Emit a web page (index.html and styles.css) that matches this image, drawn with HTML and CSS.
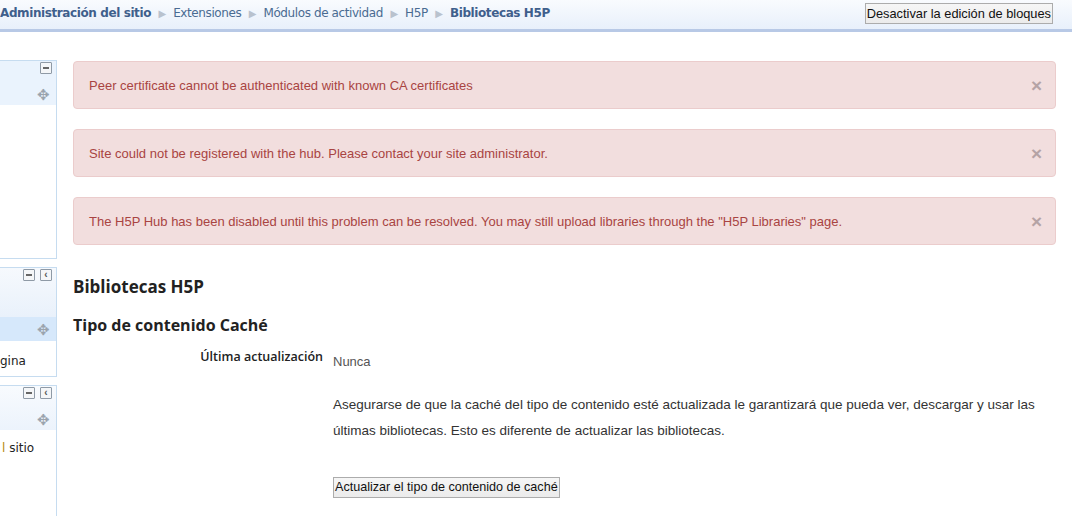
FILE: index.html
```html
<!DOCTYPE html>
<html lang="es">
  <head>
    <meta charset="UTF-8" />
    <title>Bibliotecas H5P</title>
    <link rel="stylesheet" href="styles.css">
  </head>
  <body>
    <div class="navbar">
      <div class="breadcrumb">
        <a class="first" href="#">Administración del sitio</a>
        <span class="sep">&#9654;</span>
        <a href="#">Extensiones</a>
        <span class="sep">&#9654;</span>
        <a href="#">Módulos de actividad</a>
        <span class="sep">&#9654;</span>
        <a href="#">H5P</a>
        <span class="sep">&#9654;</span>
        <span class="current">Bibliotecas H5P</span>
      </div>
      <button class="btn edit-btn">Desactivar la edición de bloques</button>
    </div>

    <div class="page">
      <!-- left column, only its right edge is in view -->
      <div class="side">
        <div class="block block-one">
          <div class="block-head">
            <div class="icons"><span class="ico ico-min"></span></div>
            <div class="move-row"><span class="move">&#10021;</span></div>
          </div>
          <div class="block-body"></div>
        </div>
        <div class="block block-two">
          <div class="block-head">
            <div class="icons"><span class="ico ico-min"></span><span class="ico ico-dock">&#8249;</span></div>
          </div>
          <div class="move-row active"><span class="move">&#10021;</span></div>
          <div class="block-body"><span>gina</span></div>
        </div>
        <div class="block block-three">
          <div class="block-head">
            <div class="icons"><span class="ico ico-min"></span><span class="ico ico-dock">&#8249;</span></div>
            <div class="move-row"><span class="move">&#10021;</span></div>
          </div>
          <div class="block-body"><span><span class="hl">l</span> sitio</span></div>
        </div>
      </div>

      <div class="main">
        <div class="alert">
          <span>Peer certificate cannot be authenticated with known CA certificates</span>
          <span class="close">&times;</span>
        </div>
        <div class="alert">
          <span>Site could not be registered with the hub. Please contact your site administrator.</span>
          <span class="close">&times;</span>
        </div>
        <div class="alert">
          <span>The H5P Hub has been disabled until this problem can be resolved. You may still upload libraries through the "H5P Libraries" page.</span>
          <span class="close">&times;</span>
        </div>

        <h2>Bibliotecas H5P</h2>
        <h3>Tipo de contenido Caché</h3>

        <div class="form-row">
          <div class="label">Última actualización</div>
          <div class="value">
            <p class="never">Nunca</p>
            <p class="desc">Asegurarse de que la caché del tipo de contenido esté actualizada le garantizará que pueda ver, descargar y usar las últimas bibliotecas. Esto es diferente de actualizar las bibliotecas.</p>
            <button class="btn">Actualizar el tipo de contenido de caché</button>
          </div>
        </div>
      </div>
    </div>
  </body>
</html>
```

FILE: styles.css
```css
* {
  margin: 0;
  padding: 0;
  box-sizing: border-box;
}
body {
  font-family: "Liberation Sans", Arial, sans-serif;
  font-size: 13px;
  color: #333;
  background: #fff;
  overflow: hidden;
}
a {
  text-decoration: none;
}
.navbar {
  height: 32px;
  display: flex;
  justify-content: space-between;
  align-items: flex-start;
  padding: 3px 19px 0 0;
  background: linear-gradient(#f9fbfe, #e8f0fb);
  border-bottom: 3px solid #b8c9e6;
}
.breadcrumb {
  font-family: "DejaVu Sans", Verdana, sans-serif;
  font-size: 12px;
  color: #4a6b92;
  padding-top: 3px;
  letter-spacing: -0.4px;
}
.breadcrumb a {
  color: #4a6b92;
}
.breadcrumb .first,
.breadcrumb .current {
  font-weight: bold;
  color: #3f5f8c;
}
.sep {
  color: #b9c2ce;
  font-size: 10px;
  margin: 0 4px;
}
.btn {
  font-family: "Liberation Sans", Arial, sans-serif;
  font-size: 12.8px;
  color: #111;
  background: linear-gradient(#f6f6f6, #ebebeb);
  border: 1px solid #acacac;
  padding: 1px 1px 2px;
  height: 21px;
}
.page {
  display: flex;
  align-items: flex-start;
  gap: 16px;
  padding-top: 28px;
}
.side {
  width: 57px;
  flex-shrink: 0;
  display: flex;
  flex-direction: column;
  gap: 8px;
}
.block {
  border: 1px solid #c6dcf0;
  border-left: none;
  background: #fff;
}
.block-head {
  background: linear-gradient(#f6f9fd, #e9f1fb);
}
.icons {
  display: flex;
  justify-content: flex-end;
  gap: 5px;
  padding: 1px 4px 0 0;
  height: 22px;
}
.ico {
  width: 12px;
  height: 12px;
  border: 1px solid #8f9aa6;
  border-radius: 1px;
  background: #f4f6f8;
  position: relative;
  font-size: 10px;
  line-height: 9px;
  text-align: center;
  color: #555;
  font-weight: bold;
}
.ico-min::after {
  content: "";
  position: absolute;
  left: 2px;
  right: 2px;
  top: 4px;
  height: 2px;
  background: #666;
}
.move-row {
  display: flex;
  justify-content: flex-end;
  align-items: center;
  padding-right: 6px;
  height: 22px;
}
.move {
  color: #9aa3ad;
  font-size: 15px;
  line-height: 1;
}
.block-one .block-head {
  background: #eaf3fd;
  height: 44px;
}
.block-one .block-body {
  height: 153px;
}
.block-two .block-head {
  height: 49px;
}
.move-row.active {
  background: #d6e8fb;
  height: 24px;
}
.block-body {
  font-family: "DejaVu Sans", Verdana, sans-serif;
  font-size: 12px;
  color: #222;
  white-space: nowrap;
}
.block-two .block-body {
  height: 35px;
  padding-top: 13px;
}
.hl {
  color: #b8860b;
}
.block-three .block-head {
  height: 44px;
  background: linear-gradient(#f8fbfe, #ecf3fc);
}
.block-three .block-body {
  height: 200px;
  padding: 11px 0 0 2px;
}
.main {
  flex: 1;
  padding-right: 16px;
  padding-top: 1px;
}
.alert {
  display: flex;
  justify-content: space-between;
  align-items: center;
  height: 48px;
  padding: 0 13px 0 15px;
  margin-bottom: 20px;
  background: #f2dede;
  border: 1px solid #ebcccc;
  border-radius: 4px;
  color: #a94442;
  font-size: 13px;
}
.close {
  color: #b5a3a5;
  font-size: 19px;
  font-weight: bold;
  line-height: 1;
}
h2,
h3 {
  font-family: "Open Sans", sans-serif;
  font-weight: bold;
  color: #222;
}
h2 {
  font-size: 17px;
  margin-top: 30px;
}
h3 {
  font-size: 16px;
  margin-top: 16px;
}
.form-row {
  display: flex;
  gap: 10px;
  margin-top: 12px;
}
.label {
  width: 250px;
  text-align: right;
  font-family: "Open Sans", sans-serif;
  font-weight: 600;
  font-size: 12.5px;
  color: #222;
}
.value {
  flex: 1;
  padding-top: 6px;
}
.never {
  color: #555;
}
.desc {
  margin-top: 23px;
  font-size: 13.5px;
  line-height: 26px;
  color: #333;
  padding-right: 10px;
}
.value .btn {
  margin-top: 33px;
  font-size: 12.6px;
}
```
